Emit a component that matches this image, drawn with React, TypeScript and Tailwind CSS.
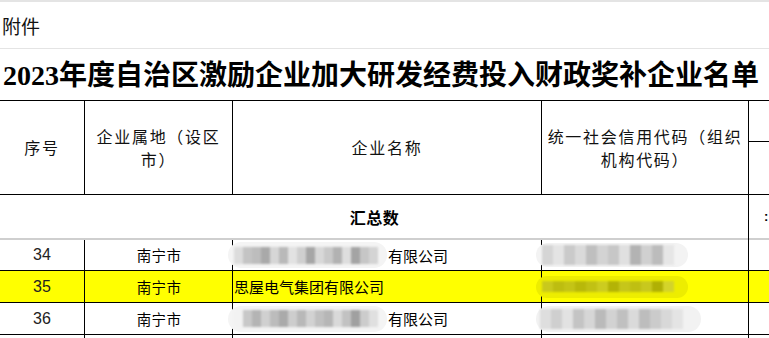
import React from "react";

const grayA = [
  "bg-[#dcdcdc]", "bg-[#c4c4c4]", "bg-[#bdbdbd]", "bg-[#a9a9a9]", "bg-[#d6d6d6]", "bg-[#b9b9b9]",
  "bg-[#e2e2e2]", "bg-[#cfcfcf]", "bg-[#a6a6a6]", "bg-[#d8d8d8]", "bg-[#c9c9c9]", "bg-[#b2b2b2]",
  "bg-[#dedede]", "bg-[#a4a4a4]", "bg-[#c6c6c6]", "bg-[#d4d4d4]",
];
const grayB = [
  "bg-[#f2f2f2]", "bg-[#c8c8c8]", "bg-[#b4b4b4]", "bg-[#d0d0d0]", "bg-[#bcbcbc]", "bg-[#aaaaaa]",
  "bg-[#cdcdcd]", "bg-[#b8b8b8]", "bg-[#d2d2d2]", "bg-[#c0c0c0]", "bg-[#b6b6b6]", "bg-[#d9d9d9]",
  "bg-[#c2c2c2]", "bg-[#a0a0a0]", "bg-[#cccccc]", "bg-[#e0e0e0]",
];
const codeA = [
  "bg-[#d5d5d5]", "bg-[#e4e4e4]", "bg-[#cacaca]", "bg-[#dadada]", "bg-[#bfbfbf]", "bg-[#d3d3d3]",
  "bg-[#c7c7c7]", "bg-[#e0e0e0]", "bg-[#b3b3b3]", "bg-[#d0d0d0]", "bg-[#bcbcbc]", "bg-[#e6e6e6]",
];
const codeY = [
  "bg-[#c9c91c]", "bg-[#bdbd10]", "bg-[#c4c416]", "bg-[#b8b80a]", "bg-[#c1c114]", "bg-[#cccc20]",
  "bg-[#b3b306]", "bg-[#c6c61a]", "bg-[#bfbf12]", "bg-[#c8c81e]", "bg-[#b0b004]", "bg-[#d4d42a]",
];
const codeB = [
  "bg-[#dedede]", "bg-[#cfcfcf]", "bg-[#e2e2e2]", "bg-[#c4c4c4]", "bg-[#d6d6d6]", "bg-[#bababa]",
  "bg-[#d2d2d2]", "bg-[#c0c0c0]", "bg-[#dadada]", "bg-[#bdbdbd]", "bg-[#cbcbcb]", "bg-[#d8d8d8]",
  "bg-[#e4e4e4]",
];

function Blocks({ colors, w, h }: { colors: string[]; w: string; h: string }) {
  return (
    <div className={`flex blur-[1px] ${h}`}>
      {colors.map((c, i) => (
        <div key={i} className={`${c} ${w} h-full`} />
      ))}
    </div>
  );
}

const Cell = ({ className = "", children }: { className?: string; children?: React.ReactNode }) => (
  <div className={`border-r border-black flex items-center shrink-0 ${className}`}>{children}</div>
);

function DataRow({
  n,
  h,
  yellow,
  name,
  code,
}: {
  n: string;
  h: string;
  yellow?: boolean;
  name: React.ReactNode;
  code: React.ReactNode;
}) {
  return (
    <div className={`flex border-b border-black ${h} ${yellow ? "bg-[#ffff00]" : "bg-white"}`}>
      <Cell className="w-[85px] justify-center">
        <span className="font-['Liberation_Sans_Narrow','Liberation_Sans',sans-serif] text-[16px] text-[#222]">{n}</span>
      </Cell>
      <Cell className="w-[148px] justify-center">
        <span className="text-[14.5px] tracking-[0.3px] pl-[1px]">南宁市</span>
      </Cell>
      <Cell className="w-[309px]">{name}</Cell>
      <Cell className="w-[207px]">{code}</Cell>
      <div className="flex-1" />
    </div>
  );
}

function BlurName({ colors }: { colors: string[] }) {
  return (
    <div className="flex items-center">
      <div className="-ml-[5px] w-[159px] h-[26px] rounded-full bg-[#f4f4f4] flex items-center pl-[6px] blur-[0.6px]">
        <Blocks colors={colors} w="w-[9px]" h="h-[17px]" />
      </div>
      <span className="text-[15px] pl-[1px] leading-none">有限公司</span>
    </div>
  );
}

function BlurCode({ colors, pale, h }: { colors: string[]; pale: string; h: string }) {
  return (
    <div className={`-ml-[6px] w-[152px] rounded-full ${pale} flex items-center pl-[6px]`}>
      <Blocks colors={colors} w="w-[11px]" h={h} />
    </div>
  );
}

export default function App() {
  return (
    <div className="w-[769px] h-[338px] overflow-hidden bg-white text-black font-['Noto_Sans_CJK_SC',sans-serif]">
      <div className="h-[2px] bg-[#e4e4e4]" />
      <div className="h-[47px] border-b border-[#e4e4e4] flex items-center pl-[2px] text-[19px] leading-none text-[#111]">
        附件
      </div>
      <div className="h-[51px] flex items-center pl-[3px] pt-[2px] text-[28px] font-bold leading-none whitespace-nowrap font-['Liberation_Serif','Noto_Sans_CJK_SC',serif]">
        2023年度自治区激励企业加大研发经费投入财政奖补企业名单
      </div>

      {/* header */}
      <div className="flex h-[95px] border-t border-b border-black text-[16px] tracking-[1.7px] leading-[23px] text-[#111]">
        <Cell className="w-[85px] justify-center">序号</Cell>
        <Cell className="w-[148px] justify-center text-center">
          <span>
            企业属地（设区
            <br />
            市）
          </span>
        </Cell>
        <Cell className="w-[309px] justify-center">企业名称</Cell>
        <Cell className="w-[207px] justify-center text-center">
          <span>
            统一社会信用代码（组织
            <br />
            机构代码）
          </span>
        </Cell>
        <div className="flex-1 flex flex-col">
          <div className="h-[41px] border-b border-black" />
          <div className="flex-1" />
        </div>
      </div>

      {/* summary */}
      <div className="flex h-[43px]">
        <Cell className="w-[749px] justify-center">
          <span className="font-bold text-[16px] tracking-[0.5px] pl-[1px]">汇总数</span>
        </Cell>
        <div className="flex-1 flex items-center pl-[15px]">
          <span className="font-bold text-[13px] font-['Liberation_Sans',sans-serif]">:</span>
        </div>
      </div>
      <div className="flex h-[2px]">
        <div className="w-[748px] bg-[#cfcfcf]" />
        <div className="w-[1px] bg-black" />
        <div className="flex-1 bg-[#cfcfcf]" />
      </div>

      <DataRow
        n="34"
        h="h-[31px]"
        name={<BlurName colors={grayA} />}
        code={<BlurCode colors={codeA} pale="bg-[#f3f3f3] h-[24px]" h="h-[20px]" />}
      />
      <DataRow
        n="35"
        h="h-[32px]"
        yellow
        name={<span className="text-[15px] pl-[1px] leading-none">思屋电气集团有限公司</span>}
        code={<BlurCode colors={codeY} pale="bg-[#eded00] h-[22px]" h="h-[11px]" />}
      />
      <DataRow
        n="36"
        h="h-[32px]"
        name={<BlurName colors={grayB} />}
        code={
          <div className="-ml-[6px] w-[165px] h-[26px] rounded-full bg-[#f2f2f2] flex items-center pl-[4px]">
            <Blocks colors={codeB} w="w-[11px]" h="h-[20px]" />
          </div>
        }
      />
      <div className="flex h-[10px]">
        <Cell className="w-[85px]" />
        <Cell className="w-[148px]" />
        <Cell className="w-[309px]" />
        <Cell className="w-[207px]" />
      </div>
    </div>
  );
}
